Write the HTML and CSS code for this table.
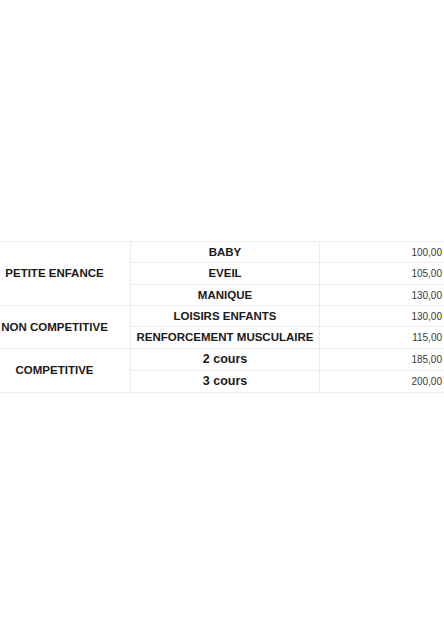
FILE: index.html
```html
<!DOCTYPE html>
<html lang="fr">
<head>
<meta charset="utf-8">
<title>Tarifs</title>
<link rel="stylesheet" href="styles.css">
</head>
<body>
<div class="page">
<table class="tarifs">
  <colgroup>
    <col class="c-cat">
    <col class="c-cours">
    <col class="c-prix">
  </colgroup>
  <tbody>
    <tr class="r21">
      <td class="cat" rowspan="3">PETITE ENFANCE</td>
      <td class="cours">BABY</td>
      <td class="prix">100,00</td>
    </tr>
    <tr class="r22">
      <td class="cours">EVEIL</td>
      <td class="prix">105,00</td>
    </tr>
    <tr class="r21">
      <td class="cours">MANIQUE</td>
      <td class="prix">130,00</td>
    </tr>
    <tr class="r21">
      <td class="cat" rowspan="2">NON COMPETITIVE</td>
      <td class="cours">LOISIRS ENFANTS</td>
      <td class="prix">130,00</td>
    </tr>
    <tr class="r22">
      <td class="cours">RENFORCEMENT MUSCULAIRE</td>
      <td class="prix">115,00</td>
    </tr>
    <tr class="r22">
      <td class="cat" rowspan="2">COMPETITIVE</td>
      <td class="cours big">2 cours</td>
      <td class="prix">185,00</td>
    </tr>
    <tr class="r22">
      <td class="cours big">3 cours</td>
      <td class="prix">200,00</td>
    </tr>
  </tbody>
</table>
</div>
</body>
</html>
```

FILE: styles.css
```css
html, body {
  margin: 0;
  padding: 0;
  background: #ffffff;
}

.page {
  padding-top: 241px;
  overflow: hidden;
  width: 444px;
}

.tarifs {
  border-collapse: collapse;
  table-layout: fixed;
  width: 470px;
  margin-left: -22px;
  font-family: "Liberation Sans", Arial, sans-serif;
}

.c-cat { width: 152px; }
.c-cours { width: 189px; }
.c-prix { width: 129px; }

.tarifs td {
  border: 1px solid #ececec;
  padding: 0 2px;
  line-height: 13px;
}

.r21 { height: 21px; }
.r22 { height: 22px; }

.cat {
  text-align: center;
  font-weight: bold;
  font-size: 11.5px;
  color: #1a1a1a;
}

.cours {
  text-align: center;
  font-weight: bold;
  font-size: 11.5px;
  color: #1a1a1a;
}

.cours.big {
  font-size: 12.5px;
}

.tarifs td.prix {
  text-align: right;
  font-size: 10px;
  color: #3a3a3a;
  padding-right: 6px;
}
```
